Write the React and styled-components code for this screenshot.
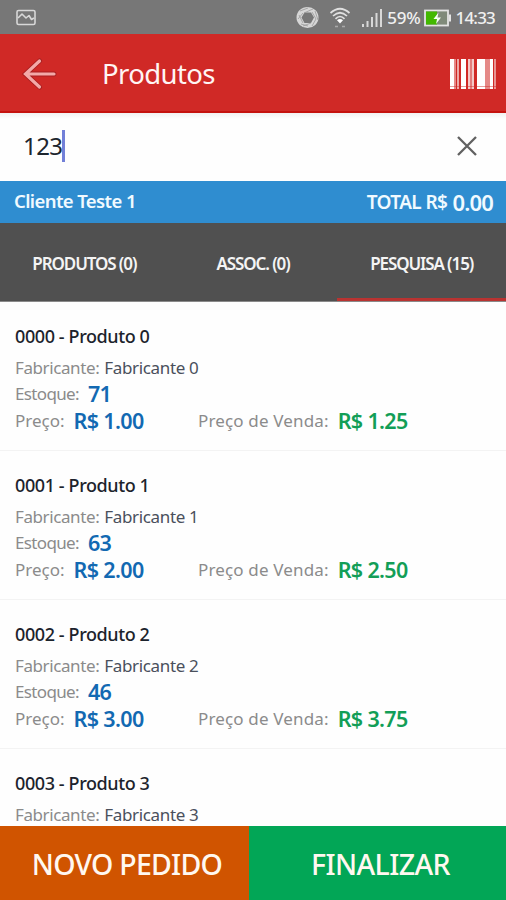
import React, { useState } from "react";
import styled, { createGlobalStyle } from "styled-components";

const GlobalStyle = createGlobalStyle`
  * {
    box-sizing: border-box;
  }

  body {
    margin: 0;
    font-family: "Noto Sans", "Open Sans", sans-serif;
    background-color: #fefefe;
    overflow: hidden;
  }
`;
const Container = styled.div`
  width: 100%;
  height: 100vh;
  display: flex;
  flex-direction: column;
  overflow: hidden;
`;
const StatusBar = styled.div`
  height: 34px;
  flex-shrink: 0;
  display: flex;
  align-items: center;
  justify-content: space-between;
  padding: 1px 11px 0 16px;
  background-color: #777777;
  color: #f0f0f0;
`;
const StatusIcons = styled.div`
  display: flex;
  align-items: center;
`;
const StatusText = styled.span`
  font-size: 17px;
  line-height: 33px;
  font-weight: 500;
  letter-spacing: ${(props) => props.$spacing}px;
  margin-left: ${(props) => props.$left}px;
`;
const Icon = styled.svg`
  display: block;
  flex-shrink: 0;
  margin-left: ${(props) => props.$left || 0}px;
`;
const AppBar = styled.header`
  height: 79px;
  flex-shrink: 0;
  display: flex;
  align-items: center;
  padding: 2px 10px 0 22px;
  background-color: #d02926;
  border-bottom: 2px solid #c5130f;
`;
const Title = styled.h1`
  flex: 1;
  margin: 0 0 0 44px;
  font-size: 27.5px;
  font-weight: 400;
  line-height: 40px;
  letter-spacing: -0.6px;
  color: #fff5f4;
`;
const IconButton = styled.button`
  display: block;
  padding: 0;
  border: none;
  background: none;
  cursor: pointer;
`;
const Search = styled.div`
  height: 68px;
  flex-shrink: 0;
  display: flex;
  align-items: center;
  padding: 0 29px 2px 23px;
  background: linear-gradient(#f1f1f1, #fefefe 6px);
`;
const Query = styled.div`
  flex: 1;
  display: flex;
  align-items: center;
  font-size: 24px;
  line-height: 32px;
  letter-spacing: -0.6px;
  color: #1d262e;
`;
const Caret = styled.span`
  width: 3px;
  height: 32px;
  background-color: #7280d8;
`;
const Client = styled.div`
  height: 42px;
  flex-shrink: 0;
  display: flex;
  align-items: center;
  justify-content: space-between;
  padding: 0 13px 0 14px;
  background-color: #2f8dd0;
  color: #f0faff;
  font-weight: 600;
  line-height: 40px;
`;
const ClientName = styled.span`
  font-size: 18.5px;
  letter-spacing: -0.6px;
  padding-bottom: 2px;
`;
const Total = styled.span`
  display: flex;
  align-items: center;
  gap: 5px;
  font-size: 19px;
  letter-spacing: -0.6px;
`;
const TotalValue = styled.span`
  font-size: 22px;
  letter-spacing: -0.8px;
`;
const Tabs = styled.nav`
  height: 79px;
  flex-shrink: 0;
  display: grid;
  grid-template-columns: repeat(3, 1fr);
  background-color: #505050;
  border-bottom: 1px solid #8a8a8a;
`;
const Tab = styled.button`
  padding: 5px 0 0;
  border: none;
  border-bottom: 3px solid ${(props) => (props.$active ? "#b93331" : "#505050")};
  background: none;
  font-family: inherit;
  font-size: 17px;
  font-weight: 600;
  letter-spacing: -1.1px;
  color: #f4f4f4;
  cursor: pointer;
`;
const List = styled.div`
  flex: 1;
  min-height: 0;
  overflow: hidden;
`;
const Item = styled.div`
  padding: 21px 14px 15px 15px;
  border-bottom: 1px solid #f3f3f3;

  &:last-child {
    padding-bottom: 0;
    border-bottom: none;
  }
`;
const ItemTitle = styled.div`
  font-size: 18px;
  font-weight: 500;
  line-height: 26px;
  letter-spacing: -0.4px;
  margin-bottom: 6px;
  color: #1c232c;
`;
const Row = styled.div`
  height: ${(props) => props.$height || 26}px;
  display: flex;
  align-items: center;
`;
const Cell = styled.div`
  width: ${(props) => (props.$first ? "183px" : "auto")};
  display: flex;
  align-items: center;
  gap: 9px;
`;
const Label = styled.span`
  font-size: 17px;
  line-height: 26px;
  letter-spacing: ${(props) => props.$spacing || 0}px;
  color: #8b8b8b;
`;
const Maker = styled.span`
  font-size: 17px;
  line-height: 26px;
  letter-spacing: -0.35px;
  margin-left: 5px;
  color: #4a505c;
`;
const Value = styled.span`
  font-size: 21.5px;
  font-weight: 600;
  line-height: 26px;
  letter-spacing: -0.65px;
  color: ${(props) => props.$color};
`;
const Footer = styled.footer`
  height: 74px;
  flex-shrink: 0;
  display: flex;
`;
const Button = styled.button`
  width: ${(props) => props.$width};
  flex: ${(props) => (props.$width ? "none" : 1)};
  padding: 1px 0 0 ${(props) => props.$left || 0}px;
  border: none;
  background-color: ${(props) => props.$color};
  color: #fff8f0;
  font-family: inherit;
  font-size: 28.5px;
  font-weight: 500;
  letter-spacing: ${(props) => props.$spacing}px;
  white-space: nowrap;
  cursor: pointer;
`;

const blue = "#1269b2";
const green = "#129e57";

const products = [
  { code: "0000", name: "Produto 0", maker: "Fabricante 0", stock: 71, price: "1.00", sale: "1.25" },
  { code: "0001", name: "Produto 1", maker: "Fabricante 1", stock: 63, price: "2.00", sale: "2.50" },
  { code: "0002", name: "Produto 2", maker: "Fabricante 2", stock: 46, price: "3.00", sale: "3.75" },
  { code: "0003", name: "Produto 3", maker: "Fabricante 3" },
];

const tabs = ["PRODUTOS (0)", "ASSOC. (0)", "PESQUISA (15)"];

// x, width, opacity
const bars = [
  [0, 4, 1],
  [4, 2, 0.45],
  [7, 2, 0.6],
  [11, 5, 1],
  [18, 2, 0.75],
  [20, 2, 0.4],
  [22, 2, 0.75],
  [27, 8, 1],
  [35, 5, 0.45],
  [40, 3, 1],
  [44, 2, 0.5],
];

const PictureIcon = () => (
  <Icon width="20" height="17" viewBox="0 0 20 17" fill="none" stroke="#d8d8d8" strokeWidth="1.6">
    <rect x="1" y="1.5" width="18" height="14" rx="1.6" />
    <path d="M2 9l4-4 4 4 3-2.5 2.5 4L18 9" strokeLinejoin="round" />
  </Icon>
);

const RingIcon = () => (
  <Icon width="24" height="24" viewBox="0 0 24 24" fill="none">
    <path
      fillRule="evenodd"
      d="M11.5 1a11 10.5 0 1 0 0 21a11 10.5 0 1 0 0-21zM8.5 6.5H15l3 5-3 5.5H8.5l-3-5.5z"
      fill="#d6d6d6"
    />
    <path
      d="M4 5l8-3M8 7l9-4M16 6l4 7M19 5l3 9M20 13l-4 7M15 17l-8 3M12 20l-7-2M7 17l-4-8M2 13l5-6"
      stroke="#999999"
      strokeWidth="0.8"
    />
  </Icon>
);

const WifiIcon = () => (
  <Icon $left={9} width="22" height="22" viewBox="0 0 22 22" fill="none" stroke="#e0e0e0" strokeWidth="1.7">
    <path d="M1.5 6Q11-2.5 20.5 6M4 9Q11 2.5 18 9M6.5 11.8Q11 7.2 15.5 11.8" />
    <path d="M8 13.2q3-2.4 6 0L11 16.5z" fill="#fff" stroke="none" />
    <path d="M6 19.5h3M13 19.5h3" stroke="#aaa" />
  </Icon>
);

const SignalIcon = () => (
  <Icon $left={11} width="21" height="20" viewBox="0 0 21 20" fill="#d8d8d8">
    <rect x="0" y="16" width="2" height="3" />
    <rect x="4.5" y="13" width="2" height="6" />
    <rect x="9" y="9" width="2" height="10" />
    <rect x="13.5" y="5" width="2" height="14" />
    <rect x="18" y="1" width="2" height="18" />
  </Icon>
);

const BatteryIcon = () => (
  <Icon $left={4} width="27" height="18" viewBox="0 0 27 18">
    <rect x="1" y="1.5" width="23" height="15" fill="#808a7a" stroke="#e4e4e4" strokeWidth="1.8" />
    <rect x="2" y="2.5" width="11" height="13" fill="#42b800" />
    <rect x="25" y="5.5" width="2" height="7" fill="#e4e4e4" />
    <path d="M14.5 3.5l-5 6.5h3.5l-1 5 5-6.5h-3.5z" fill="#f4fff0" />
  </Icon>
);

const BackIcon = () => (
  <Icon width="36" height="34" viewBox="0 0 36 34" fill="none" strokeLinecap="round">
    <path d="M17.5 4L3.5 17l14 13M3.5 17h28.5" stroke="#a81f20" strokeWidth="5" />
    <path d="M17.5 4L3.5 17l14 13M3.5 17h28.5" stroke="#f3a9a8" strokeWidth="3.2" />
  </Icon>
);

const BarcodeIcon = () => (
  <Icon width="46" height="30" viewBox="0 0 46 30">
    {bars.map(([x, width, opacity]) => (
      <rect key={x} x={x} y="0" width={width} height="30" fill="#fff" opacity={opacity} />
    ))}
    <path d="M0 27.5h46" stroke="#d02926" opacity="0.45" />
  </Icon>
);

const CloseIcon = () => (
  <Icon width="20" height="20" viewBox="0 0 20 20" stroke="#616161" strokeWidth="2.3">
    <path d="M1 1l18 18M19 1L1 19" />
  </Icon>
);

const Product = ({ item }) => (
  <Item>
    <ItemTitle>
      {item.code} - {item.name}
    </ItemTitle>
    <Row>
      <Label $spacing={-0.4}>Fabricante:</Label>
      <Maker>{item.maker}</Maker>
    </Row>
    {item.stock && (
      <>
        <Row>
          <Cell>
            <Label $spacing={-0.65}>Estoque:</Label>
            <Value $color={blue}>{item.stock}</Value>
          </Cell>
        </Row>
        <Row $height={28}>
          <Cell $first>
            <Label>Preço:</Label>
            <Value $color={blue}>R$ {item.price}</Value>
          </Cell>
          <Cell>
            <Label $spacing={0.15}>Preço de Venda:</Label>
            <Value $color={green}>R$ {item.sale}</Value>
          </Cell>
        </Row>
      </>
    )}
  </Item>
);

const App = () => {
  const [query, setQuery] = useState("123");
  const [active, setActive] = useState(2);

  return (
    <Container>
      <GlobalStyle />
      <StatusBar>
        <PictureIcon />
        <StatusIcons>
          <RingIcon />
          <WifiIcon />
          <SignalIcon />
          <StatusText $left={4} $spacing={-0.2}>59%</StatusText>
          <BatteryIcon />
          <StatusText $left={4} $spacing={-0.8}>14:33</StatusText>
        </StatusIcons>
      </StatusBar>
      <AppBar>
        <IconButton aria-label="Voltar">
          <BackIcon />
        </IconButton>
        <Title>Produtos</Title>
        <IconButton aria-label="Código de barras">
          <BarcodeIcon />
        </IconButton>
      </AppBar>
      <Search>
        <Query>
          {query}
          <Caret />
        </Query>
        <IconButton aria-label="Limpar" onClick={() => setQuery("")}>
          <CloseIcon />
        </IconButton>
      </Search>
      <Client>
        <ClientName>Cliente Teste 1</ClientName>
        <Total>
          TOTAL R$ <TotalValue>0.00</TotalValue>
        </Total>
      </Client>
      <Tabs>
        {tabs.map((tab, i) => (
          <Tab key={tab} $active={i === active} onClick={() => setActive(i)}>
            {tab}
          </Tab>
        ))}
      </Tabs>
      <List>
        {products.map((item) => (
          <Product key={item.code} item={item} />
        ))}
      </List>
      <Footer>
        <Button $width="249px" $color="#d05400" $left={5} $spacing={-0.75}>
          NOVO PEDIDO
        </Button>
        <Button $color="#02a656" $left={6} $spacing={-0.6}>
          FINALIZAR
        </Button>
      </Footer>
    </Container>
  );
};

export default App;
